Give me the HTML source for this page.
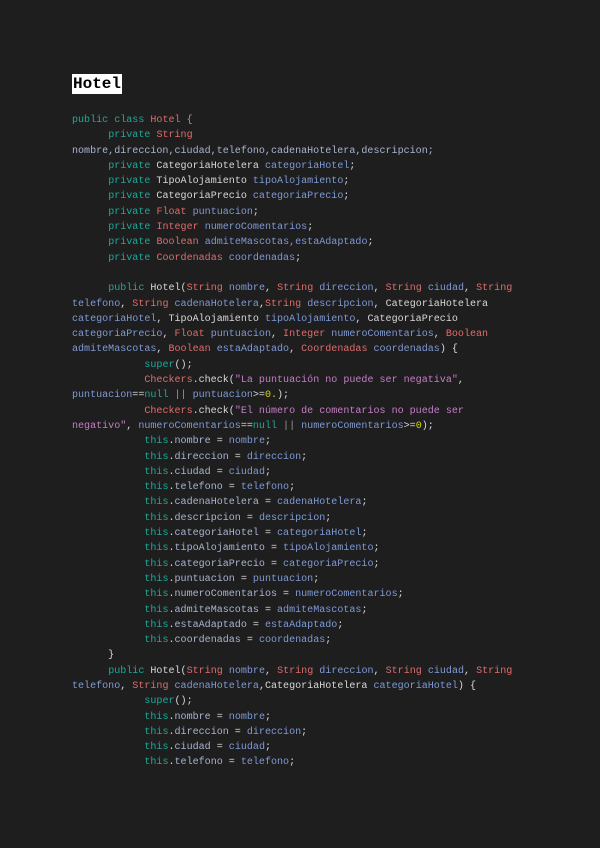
<!DOCTYPE html>
<html><head><meta charset="utf-8"><style>
html,body{margin:0;padding:0;background:#1e1e1e;width:600px;height:848px;overflow:hidden}
h1{position:absolute;left:72px;top:74px;margin:0;background:#fff;color:#000;font:bold 16px/20px "Liberation Mono",monospace;padding:0 1px}
pre{position:absolute;left:72px;top:113px;margin:0;font:10.05px/15.3px "Liberation Mono",monospace;color:#d8d8d8}
.k{color:#1fa89a}.t{color:#e06c6c}.v{color:#7f9ad6}.f{color:#a9b4d0}.s{color:#c77dc7}.n{color:#d7d700}.p{color:#9a9a9a}
</style></head><body>
<h1>Hotel</h1>
<pre><span class="k">public class</span> <span class="t">Hotel</span> <span class="p">{</span>
      <span class="k">private</span> <span class="t">String</span>
<span class="f">nombre,direccion,ciudad,telefono,cadenaHotelera,descripcion;</span>
      <span class="k">private</span> CategoriaHotelera <span class="v">categoriaHotel</span>;
      <span class="k">private</span> TipoAlojamiento <span class="v">tipoAlojamiento</span>;
      <span class="k">private</span> CategoriaPrecio <span class="v">categoriaPrecio</span>;
      <span class="k">private</span> <span class="t">Float</span> <span class="v">puntuacion</span>;
      <span class="k">private</span> <span class="t">Integer</span> <span class="v">numeroComentarios</span>;
      <span class="k">private</span> <span class="t">Boolean</span> <span class="v">admiteMascotas,estaAdaptado</span>;
      <span class="k">private</span> <span class="t">Coordenadas</span> <span class="v">coordenadas</span>;

      <span class="k">public</span> Hotel(<span class="t">String</span> <span class="v">nombre</span>, <span class="t">String</span> <span class="v">direccion</span>, <span class="t">String</span> <span class="v">ciudad</span>, <span class="t">String</span>
<span class="v">telefono</span>, <span class="t">String</span> <span class="v">cadenaHotelera</span>,<span class="t">String</span> <span class="v">descripcion</span>, CategoriaHotelera
<span class="v">categoriaHotel</span>, TipoAlojamiento <span class="v">tipoAlojamiento</span>, CategoriaPrecio
<span class="v">categoriaPrecio</span>, <span class="t">Float</span> <span class="v">puntuacion</span>, <span class="t">Integer</span> <span class="v">numeroComentarios</span>, <span class="t">Boolean</span>
<span class="v">admiteMascotas</span>, <span class="t">Boolean</span> <span class="v">estaAdaptado</span>, <span class="t">Coordenadas</span> <span class="v">coordenadas</span>) {
            <span class="k">super</span>();
            <span class="t">Checkers</span>.check(<span class="s">"La puntuación no puede ser negativa"</span>,
<span class="v">puntuacion</span>==<span class="k">null</span> <span class="p">||</span> <span class="v">puntuacion</span>&gt;=<span class="n">0.</span>);
            <span class="t">Checkers</span>.check(<span class="s">"El número de comentarios no puede ser</span>
<span class="s">negativo"</span>, <span class="v">numeroComentarios</span>==<span class="k">null</span> <span class="p">||</span> <span class="v">numeroComentarios</span>&gt;=<span class="n">0</span>);
            <span class="k">this</span>.<span class="f">nombre</span> = <span class="v">nombre</span>;
            <span class="k">this</span>.<span class="f">direccion</span> = <span class="v">direccion</span>;
            <span class="k">this</span>.<span class="f">ciudad</span> = <span class="v">ciudad</span>;
            <span class="k">this</span>.<span class="f">telefono</span> = <span class="v">telefono</span>;
            <span class="k">this</span>.<span class="f">cadenaHotelera</span> = <span class="v">cadenaHotelera</span>;
            <span class="k">this</span>.<span class="f">descripcion</span> = <span class="v">descripcion</span>;
            <span class="k">this</span>.<span class="f">categoriaHotel</span> = <span class="v">categoriaHotel</span>;
            <span class="k">this</span>.<span class="f">tipoAlojamiento</span> = <span class="v">tipoAlojamiento</span>;
            <span class="k">this</span>.<span class="f">categoriaPrecio</span> = <span class="v">categoriaPrecio</span>;
            <span class="k">this</span>.<span class="f">puntuacion</span> = <span class="v">puntuacion</span>;
            <span class="k">this</span>.<span class="f">numeroComentarios</span> = <span class="v">numeroComentarios</span>;
            <span class="k">this</span>.<span class="f">admiteMascotas</span> = <span class="v">admiteMascotas</span>;
            <span class="k">this</span>.<span class="f">estaAdaptado</span> = <span class="v">estaAdaptado</span>;
            <span class="k">this</span>.<span class="f">coordenadas</span> = <span class="v">coordenadas</span>;
      }
      <span class="k">public</span> Hotel(<span class="t">String</span> <span class="v">nombre</span>, <span class="t">String</span> <span class="v">direccion</span>, <span class="t">String</span> <span class="v">ciudad</span>, <span class="t">String</span>
<span class="v">telefono</span>, <span class="t">String</span> <span class="v">cadenaHotelera</span>,CategoriaHotelera <span class="v">categoriaHotel</span>) {
            <span class="k">super</span>();
            <span class="k">this</span>.<span class="f">nombre</span> = <span class="v">nombre</span>;
            <span class="k">this</span>.<span class="f">direccion</span> = <span class="v">direccion</span>;
            <span class="k">this</span>.<span class="f">ciudad</span> = <span class="v">ciudad</span>;
            <span class="k">this</span>.<span class="f">telefono</span> = <span class="v">telefono</span>;</pre>
</body></html>
